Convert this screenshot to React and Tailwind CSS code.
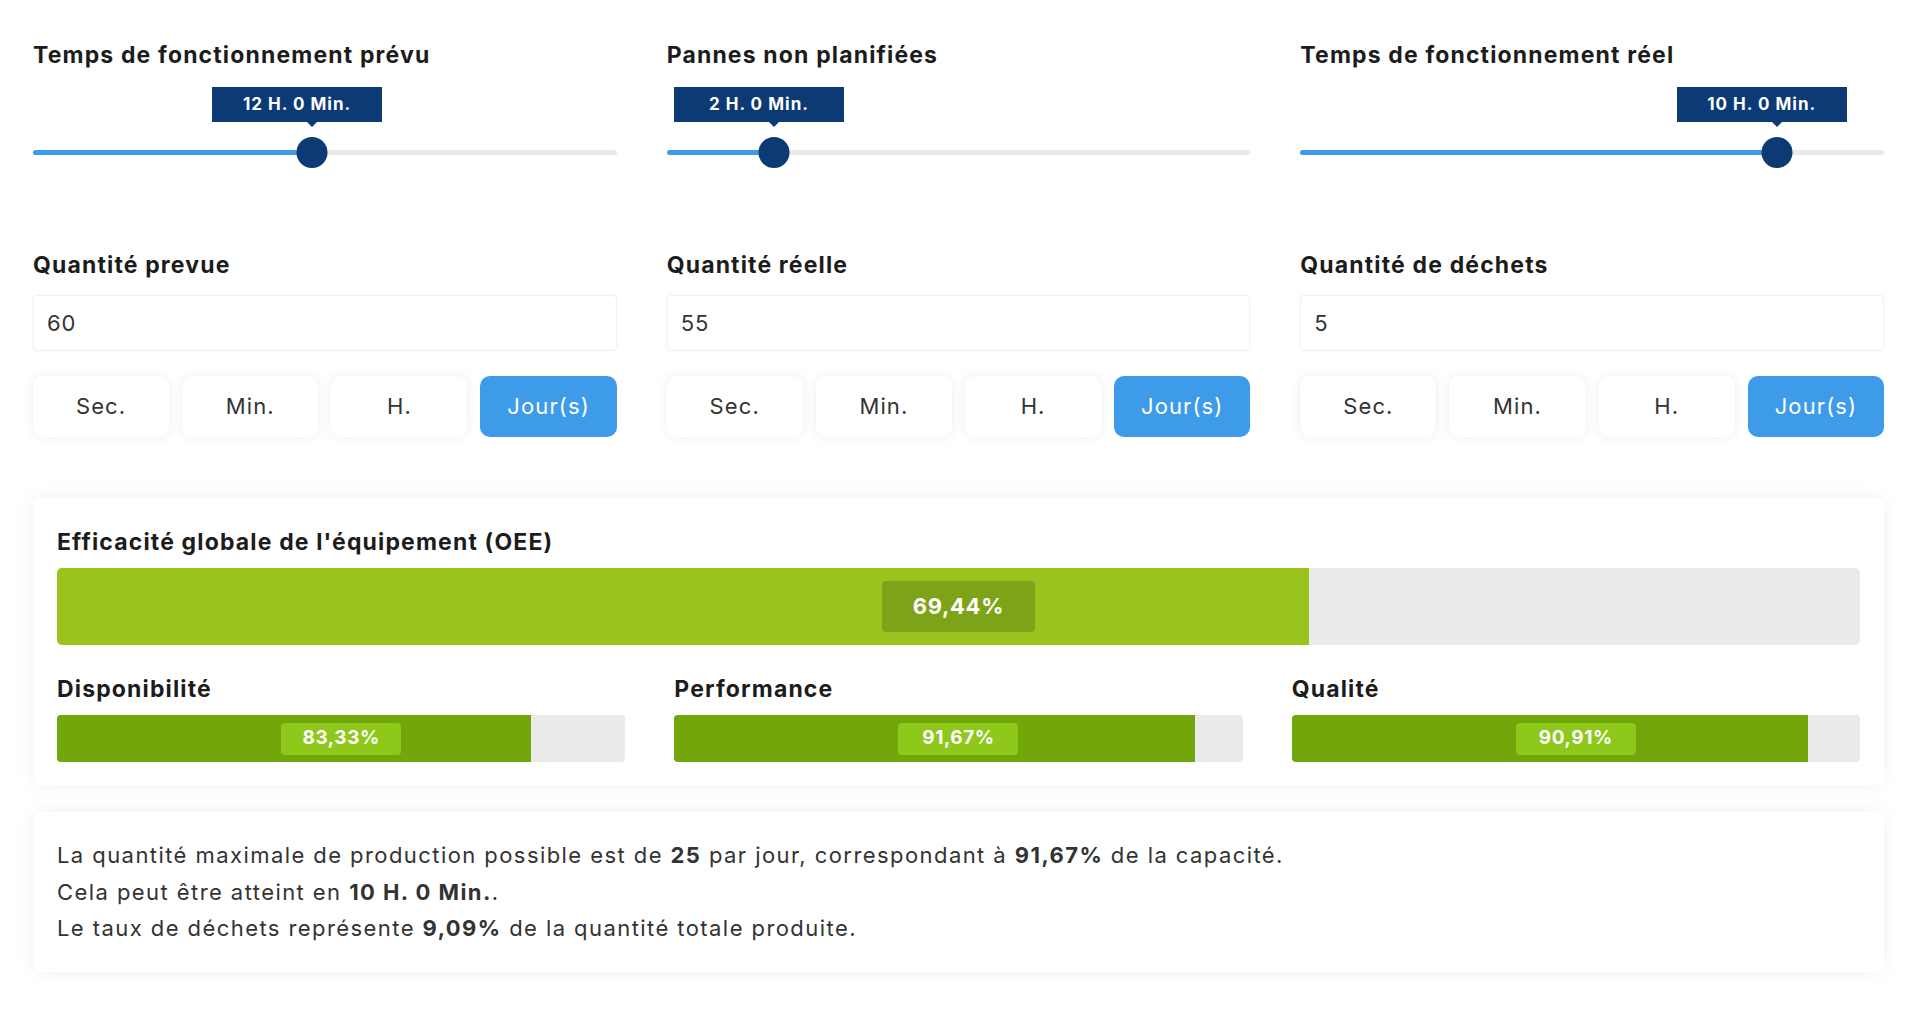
import React, { useState } from "react";

const sliders = [
  { label: "Temps de fonctionnement prévu", value: "12 H. 0 Min.", pct: 0.477 },
  { label: "Pannes non planifiées", value: "2 H. 0 Min.", pct: 2 / 12 },
  { label: "Temps de fonctionnement réel", value: "10 H. 0 Min.", pct: 10 / 12 },
];

const quantites = [
  { label: "Quantité prevue", value: "60" },
  { label: "Quantité réelle", value: "55" },
  { label: "Quantité de déchets", value: "5" },
];

const unites = ["Sec.", "Min.", "H.", "Jour(s)"];

const facteurs = [
  { label: "Disponibilité", pct: 83.33, text: "83,33%" },
  { label: "Performance", pct: 91.67, text: "91,67%" },
  { label: "Qualité", pct: 90.91, text: "90,91%" },
];

const Titre = ({ children }) => (
  <div className="text-[23px] font-bold leading-[28px] tracking-[0.05em] text-[#1c1c1c]">{children}</div>
);

const Slider = ({ label, value, pct }) => {
  // centre du curseur, compensé par la demi-largeur du bouton (15px)
  const centre = `calc(15px + ${pct} * (100% - 30px))`;
  return (
    <div className="flex flex-col">
      <Titre>{label}</Titre>
      <div className="relative mt-[18px] h-[82px]">
        <div
          className="absolute top-0 flex h-[35px] w-[170px] items-center justify-center bg-[#0c3a74] text-[17px] font-bold tracking-[0.06em] text-white"
          style={{ left: `calc(${centre} - 100px)` }}
        >
          {value}
          <div className="absolute left-[100px] top-full h-0 w-0 -translate-x-1/2 border-x-[5px] border-t-[5px] border-x-transparent border-t-[#0c3a74]" />
        </div>
        <div className="absolute left-0 right-0 top-[63px] h-[5px] rounded-full bg-[#e9e9e9]" />
        <div
          className="absolute left-0 top-[63px] h-[5px] rounded-full bg-[#3d9be9]"
          style={{ width: centre }}
        />
        <div
          className="absolute top-[50px] h-[31px] w-[31px] -translate-x-1/2 rounded-full bg-[#0c3a74]"
          style={{ left: centre }}
        />
      </div>
    </div>
  );
};

const Quantite = ({ label, value }) => {
  const [unite, setUnite] = useState("Jour(s)");
  return (
    <div className="flex flex-col">
      <Titre>{label}</Titre>
      <input
        type="text"
        defaultValue={value}
        className="mt-[16px] h-[56px] w-full rounded-[4px] border border-[#f1f1f1] bg-white px-[13px] text-[22px] tracking-[0.04em] text-[#333] shadow-[0_0_6px_rgba(0,0,0,0.03)] outline-none"
      />
      <div className="mt-[25px] grid grid-cols-4 gap-[13px]">
        {unites.map((u) => (
          <button
            key={u}
            onClick={() => setUnite(u)}
            className={`h-[61px] rounded-[10px] text-[22px] tracking-[0.05em] ${
              unite === u
                ? "bg-[#3d9be9] text-white"
                : "bg-white text-[#333] shadow-[0_0_12px_rgba(0,0,0,0.07)]"
            }`}
          >
            {u}
          </button>
        ))}
      </div>
    </div>
  );
};

const App = () => {
  return (
    <div className="min-h-[1016px] bg-white pl-[33px] pr-[36px] pt-[41px] pb-[45px] font-['Inter',sans-serif] text-[#333]">
      <div className="grid grid-cols-3 gap-x-[50px]">
        {sliders.map((s) => (
          <Slider key={s.label} {...s} />
        ))}
      </div>

      <div className="mt-[82px] grid grid-cols-3 gap-x-[50px]">
        {quantites.map((q) => (
          <Quantite key={q.label} {...q} />
        ))}
      </div>

      <div className="mt-[61px] rounded-[8px] bg-white px-[24px] pt-[30px] pb-[23px] shadow-[0_0_20px_rgba(0,0,0,0.06)]">
        <Titre>Efficacité globale de l'équipement (OEE)</Titre>
        <div className="relative mt-[12px] flex h-[77px] items-center justify-center overflow-hidden rounded-[5px] bg-[#eaeaea]">
          <div className="absolute left-0 top-0 h-full bg-[#9bc31d]" style={{ width: "69.44%" }} />
          <div className="relative flex h-[51px] w-[153px] items-center justify-center rounded-[4px] bg-[#7ea318] text-[22px] font-bold tracking-[0.03em] text-white">
            69,44%
          </div>
        </div>

        <div className="mt-[30px] grid grid-cols-3 gap-x-[49px]">
          {facteurs.map((f) => (
            <div key={f.label} className="flex flex-col">
              <Titre>{f.label}</Titre>
              <div className="relative mt-[12px] flex h-[47px] items-center justify-center overflow-hidden rounded-[4px] bg-[#eaeaea]">
                <div className="absolute left-0 top-0 h-full bg-[#72a70b]" style={{ width: `${f.pct}%` }} />
                <div className="relative flex h-[32px] w-[120px] items-center justify-center rounded-[4px] bg-[#8dc81a] text-[19px] font-bold tracking-[0.03em] text-white">
                  {f.text}
                </div>
              </div>
            </div>
          ))}
        </div>
      </div>

      <div className="mt-[27px] rounded-[8px] bg-white px-[24px] py-[25px] text-[22px] leading-[36.5px] tracking-[0.065em] text-[#333] shadow-[0_0_20px_rgba(0,0,0,0.06)]">
        <div>
          La quantité maximale de production possible est de <b>25</b> par jour, correspondant à{" "}
          <b>91,67%</b> de la capacité.
        </div>
        <div>
          Cela peut être atteint en <b>10 H. 0 Min.</b>.
        </div>
        <div>
          Le taux de déchets représente <b>9,09%</b> de la quantité totale produite.
        </div>
      </div>
    </div>
  );
};

export default App;
